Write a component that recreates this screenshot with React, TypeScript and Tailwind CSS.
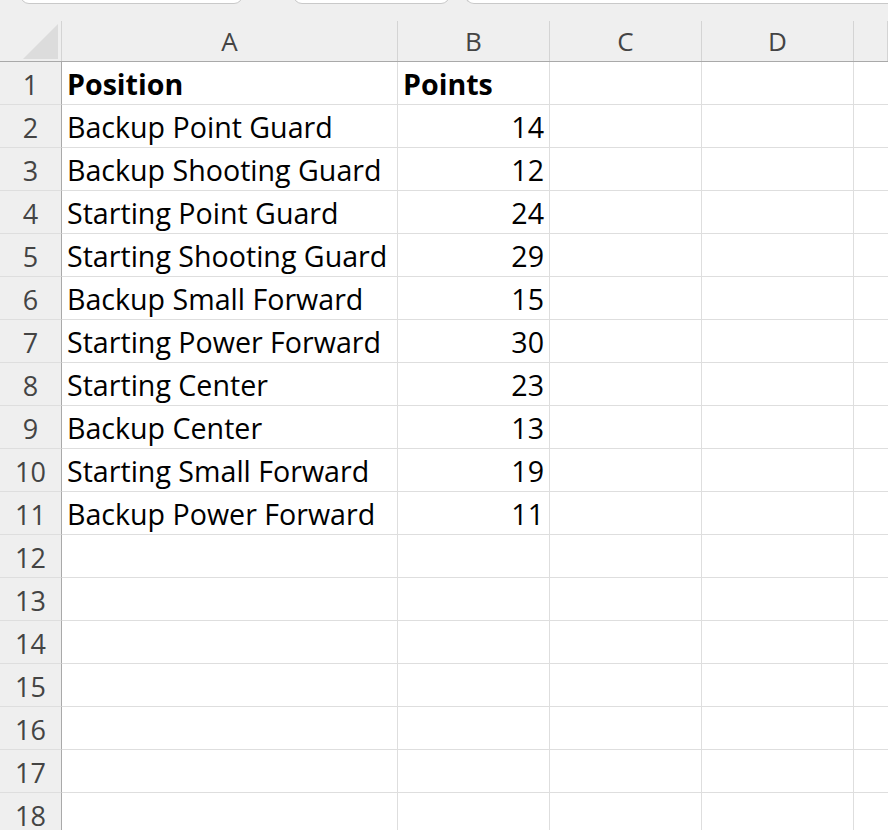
const columns = ['A', 'B', 'C', 'D', '']

const rows: [string, string][] = [
  ['Position', 'Points'],
  ['Backup Point Guard', '14'],
  ['Backup Shooting Guard', '12'],
  ['Starting Point Guard', '24'],
  ['Starting Shooting Guard', '29'],
  ['Backup Small Forward', '15'],
  ['Starting Power Forward', '30'],
  ['Starting Center', '23'],
  ['Backup Center', '13'],
  ['Starting Small Forward', '19'],
  ['Backup Power Forward', '11'],
]

const TOTAL_ROWS = 18
const grid = 'grid grid-cols-[62px_336px_152px_152px_152px_1fr]'

function CornerCell() {
  return (
    <div className="relative h-full border-r border-[#d4d4d4]">
      {/* select-all triangle */}
      <svg className="absolute right-[3px] bottom-[2px]" width="35" height="35" viewBox="0 0 35 35">
        <polygon points="35,0 35,35 0,35" fill="#dcdcdc" />
      </svg>
    </div>
  )
}

export default function App() {
  return (
    <div className="h-[830px] w-full overflow-hidden bg-white" style={{ fontFamily: '"Open Sans", "Noto Sans", sans-serif' }}>
      {/* sheet tab strip */}
      <div className="flex h-[21px] bg-[#efefef]">
        <div className="flex h-[4px] w-full items-end overflow-hidden">
          <div className="ml-[20px] h-[12px] w-[223px] shrink-0 rounded-b-[9px] border border-[#c9c9c9] bg-white" />
          <div className="ml-[50px] h-[12px] w-[157px] shrink-0 rounded-b-[9px] border border-[#c9c9c9] bg-white" />
          <div className="ml-[15px] h-[12px] flex-1 rounded-bl-[9px] border border-r-0 border-[#c9c9c9] bg-white" />
        </div>
      </div>

      {/* column headers */}
      <div className={`${grid} h-[41px] border-b border-[#a9a9a9] bg-[#efefef]`}>
        <CornerCell />
        {columns.map((c, i) => (
          <div key={i} className="flex items-center justify-center border-r border-[#d4d4d4] text-[26px] leading-none text-[#444444]">
            {c}
          </div>
        ))}
      </div>

      {/* body rows */}
      {Array.from({ length: TOTAL_ROWS }, (_, r) => {
        const data = rows[r]
        const bold = r === 0
        return (
          <div key={r} className={`${grid} h-[43px] overflow-hidden`}>
            <div className="flex items-center justify-center border-r border-b border-r-[#a9a9a9] border-b-[#dedede] bg-[#efefef] pt-[2px] text-[27px] leading-none text-[#444444]">
              {r + 1}
            </div>
            <div className={`flex items-center whitespace-nowrap border-r border-b border-[#dedede] pt-[3px] pl-[5px] text-[28.6px] leading-none text-black ${bold ? 'font-bold' : ''}`}>
              {data?.[0]}
            </div>
            <div className={`flex items-center whitespace-nowrap border-r border-b border-[#dedede] pt-[3px] pr-[5px] text-[28.6px] leading-none text-black ${bold ? 'justify-start pl-[5px] font-bold' : 'justify-end'}`}>
              {data?.[1]}
            </div>
            <div className="border-r border-b border-[#dedede]" />
            <div className="border-r border-b border-[#dedede]" />
            <div className="border-b border-[#dedede]" />
          </div>
        )
      })}
    </div>
  )
}
